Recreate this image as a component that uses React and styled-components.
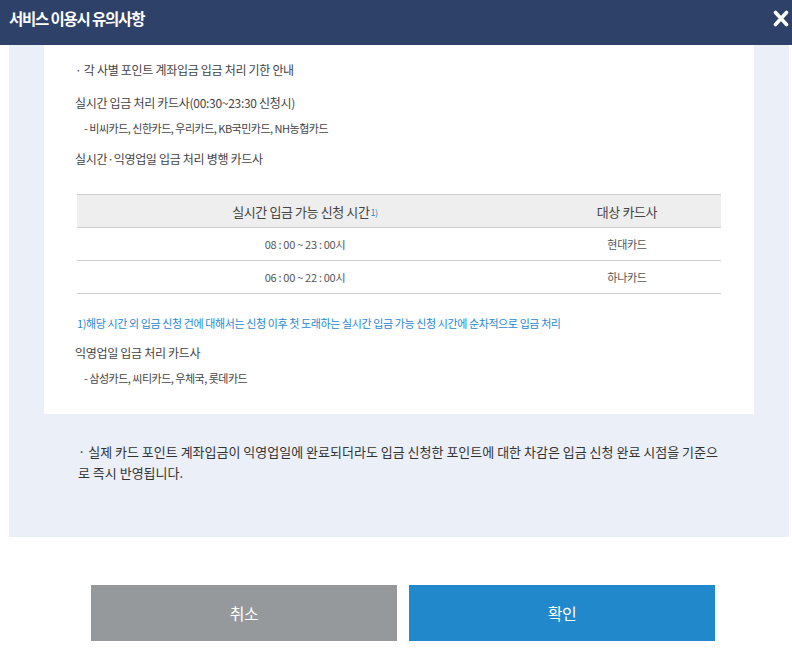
import React from "react";
import styled, { createGlobalStyle } from "styled-components";

const GlobalStyle = createGlobalStyle`
  body {
    margin: 0;
    background: #fff;
    font-family: "Noto Sans CJK KR", "Noto Sans", sans-serif;
    color: #333;
  }
`;

const Header = styled.div`
  height: 45px;
  background: #2e4169;
  display: flex;
  justify-content: space-between;
  align-items: flex-start;
  padding: 0 3px 0 9px;
`;

const Title = styled.h1`
  margin: 0;
  font-size: 15.5px;
  font-weight: 700;
  line-height: 37px;
  letter-spacing: -1.2px;
  color: #fff;
`;

const CloseButton = styled.button`
  border: 0;
  background: none;
  padding: 0;
  margin-top: 10px;
  width: 16px;
  height: 17px;
  cursor: pointer;
  display: flex;
`;

const Panel = styled.div`
  margin: 0 3px 0 9px;
  background: #ebeff8;
  padding: 0 0 54px;
`;

const InfoBox = styled.div`
  margin: 0 35px;
  background: #fff;
  padding: 15px 33px 27px 31px;
`;

const Line = styled.p`
  margin: ${(p) => p.$mt || 0}px 0 0;
  font-size: 12px;
  line-height: 20px;
  letter-spacing: -0.3px;
  color: #444;
`;

const SubLine = styled.p`
  margin: ${(p) => p.$mt || 0}px 0 0;
  padding-left: 9px;
  font-size: 11px;
  line-height: 18px;
  letter-spacing: -0.5px;
  color: #444;
`;

const Table = styled.table`
  margin: 25px 0 0 2px;
  width: calc(100% - 2px);
  border-collapse: collapse;
  border-top: 1px solid #cfcfcf;
`;

const Th = styled.th`
  height: 32px;
  background: #eeeeee;
  border-bottom: 1px solid #cfcfcf;
  font-size: 13px;
  font-weight: 400;
  letter-spacing: -0.4px;
  color: #444;
  width: ${(p) => p.$w};
  padding: 0;
`;

const Td = styled.td`
  height: 32px;
  border-bottom: 1px solid #cfcfcf;
  text-align: center;
  font-size: 11px;
  letter-spacing: -0.3px;
  color: #555;
  padding: 0;
`;

const Sup = styled.span`
  font-size: 9px;
  color: #2a88d2;
  margin-left: 1px;
  vertical-align: 1px;
`;

const Footnote = styled.p`
  margin: 20px 0 0 2px;
  font-size: 11px;
  line-height: 18px;
  letter-spacing: -0.4px;
  color: #2a88d2;
`;

const Notice = styled.p`
  margin: 27px 0 0;
  padding: 0 66px 0 69px;
  font-size: 13px;
  line-height: 21px;
  letter-spacing: 0;
  word-break: break-all;
  color: #333;
`;

const ButtonRow = styled.div`
  display: flex;
  gap: 12px;
  padding: 48px 0 0 91px;
`;

const Button = styled.button`
  width: 306px;
  height: 56px;
  border: 0;
  background: ${(p) => (p.$primary ? "#2188cc" : "#95999c")};
  color: #fff;
  font-family: "Noto Sans CJK KR", "Noto Sans", sans-serif;
  font-size: 16px;
  letter-spacing: -0.5px;
  cursor: pointer;
`;

export default function App() {
  return (
    <>
      <GlobalStyle />
      <Header>
        <Title>서비스 이용시 유의사항</Title>
        <CloseButton aria-label="닫기">
          <svg width="16" height="17" viewBox="0 0 16 17">
            <path
              d="M2.5 2.5 L13.5 14.5 M13.5 2.5 L2.5 14.5"
              stroke="#fff"
              strokeWidth="3.6"
              strokeLinecap="round"
            />
          </svg>
        </CloseButton>
      </Header>
      <Panel>
        <InfoBox>
          <Line>· 각 사별 포인트 계좌입금 입금 처리 기한 안내</Line>
          <Line $mt={13}>실시간 입금 처리 카드사(00:30~23:30 신청시)</Line>
          <SubLine $mt={6}>- 비씨카드, 신한카드, 우리카드, KB국민카드, NH농협카드</SubLine>
          <Line $mt={12}>실시간·익영업일 입금 처리 병행 카드사</Line>
          <Table>
            <thead>
              <tr>
                <Th $w="70.8%">
                  실시간 입금 가능 신청 시간<Sup>1)</Sup>
                </Th>
                <Th $w="29.2%">대상 카드사</Th>
              </tr>
            </thead>
            <tbody>
              <tr>
                <Td>08 : 00 ~ 23 : 00시</Td>
                <Td>현대카드</Td>
              </tr>
              <tr>
                <Td>06 : 00 ~ 22 : 00시</Td>
                <Td>하나카드</Td>
              </tr>
            </tbody>
          </Table>
          <Footnote>
            1)해당 시간 외 입금 신청 건에 대해서는 신청 이후 첫 도래하는 실시간 입금 가능 신청 시간에 순차적으로 입금 처리
          </Footnote>
          <Line $mt={11}>익영업일 입금 처리 카드사</Line>
          <SubLine $mt={6}>- 삼성카드, 씨티카드, 우체국, 롯데카드</SubLine>
        </InfoBox>
        <Notice>
          · 실제 카드 포인트 계좌입금이 익영업일에 완료되더라도 입금 신청한 포인트에 대한 차감은 입금 신청 완료 시점을 기준으로 즉시 반영됩니다.
        </Notice>
      </Panel>
      <ButtonRow>
        <Button>취소</Button>
        <Button $primary>확인</Button>
      </ButtonRow>
    </>
  );
}
